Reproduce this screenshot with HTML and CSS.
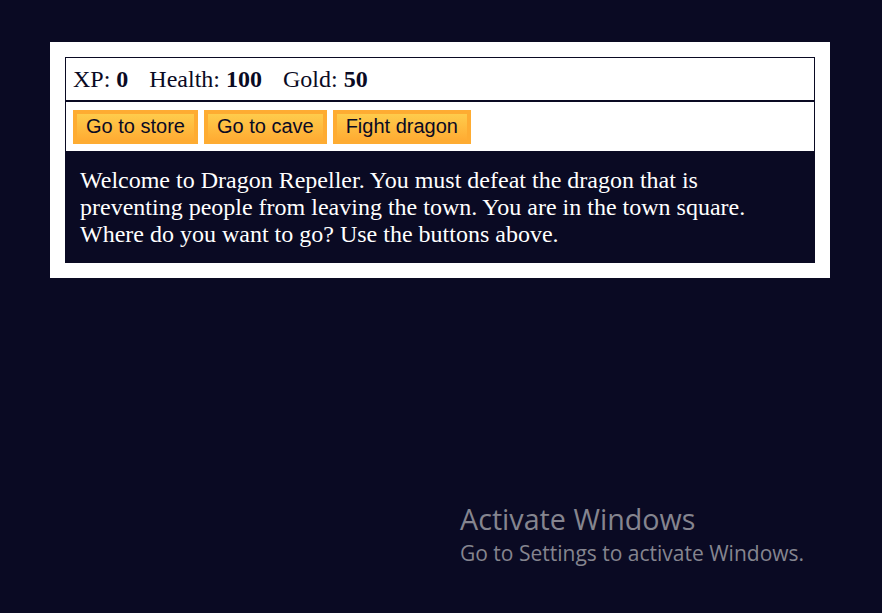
FILE: index.html
```html
<!DOCTYPE html>
<html lang="en">
<head>
<meta charset="utf-8">
<title>RPG - Dragon Repeller</title>
<link rel="stylesheet" href="styles.css">
</head>
<body>
<div class="game">
  <div class="stats">
    <span class="stat">XP: <strong>0</strong></span>
    <span class="stat">Health: <strong>100</strong></span>
    <span class="stat">Gold: <strong>50</strong></span>
  </div>
  <div class="controls">
    <button class="btn">Go to store</button>
    <button class="btn">Go to cave</button>
    <button class="btn">Fight dragon</button>
  </div>
  <div class="text">
    Welcome to Dragon Repeller. You must defeat the dragon that is preventing people from leaving the town. You are in the town square. Where do you want to go? Use the buttons above.
  </div>
</div>
<div class="watermark">
  <div class="wm-title">Activate Windows</div>
  <div class="wm-sub">Go to Settings to activate Windows.</div>
</div>
</body>
</html>
```
FILE: styles.css
```css
html, body {
  margin: 0;
  height: 100%;
}
body {
  background-color: #0a0a23;
  font-family: "Liberation Serif", "Times New Roman", serif;
  font-size: 24px;
  overflow: hidden;
}
.game {
  width: 750px;
  background-color: #ffffff;
  color: #ffffff;
  margin: 42px 0 0 50px;
  padding: 15px;
}
.stats {
  border: 1px solid #0a0a23;
  padding: 7.5px 7.5px 7.5px 7px;
  color: #0a0a23;
  line-height: 27px;
}
.stat {
  padding-right: 15px;
}
.controls {
  border: 1px solid #0a0a23;
  padding: 7.5px 7.5px 7.5px 7px;
  color: #0a0a23;
  display: flex;
  gap: 6px;
}
.btn {
  cursor: pointer;
  color: #0a0a23;
  background-color: #feac32;
  background-image: linear-gradient(#fecc4c, #ffac33);
  border: 4.5px solid #feac32;
  font-family: "Liberation Sans", Arial, sans-serif;
  font-size: 20px;
  line-height: 23px;
  padding: 1.5px 9px;
  margin: 0;
}
.text {
  background-color: #0a0a23;
  color: #ffffff;
  padding: 15px;
  line-height: 27px;
}
.watermark {
  position: absolute;
  left: 460px;
  top: 500px;
  color: #85858f;
  font-family: "Open Sans", "Noto Sans", sans-serif;
}
.wm-title {
  font-size: 28.7px;
  line-height: 38px;
}
.wm-sub {
  font-size: 21px;
  line-height: 31px;
}
```
